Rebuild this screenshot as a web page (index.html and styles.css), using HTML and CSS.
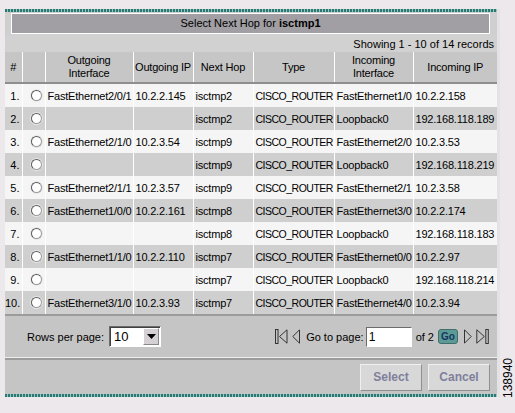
FILE: index.html
```html
<!DOCTYPE html>
<html>
<head>
<meta charset="utf-8">
<link rel="stylesheet" href="styles.css">
</head>
<body>
<div class="page">
  <div class="panel">
    <div class="teal"></div>
    <div class="title-wrap">
      <div class="title">Select Next Hop for <b>isctmp1</b></div>
    </div>
    <div class="showing">Showing 1 - 10 of 14 records</div>
    <table class="grid">
      <colgroup>
        <col class="c-num"><col class="c-radio"><col class="c-oif"><col class="c-oip"><col class="c-nh"><col class="c-type"><col class="c-iif"><col class="c-iip">
      </colgroup>
      <thead>
        <tr>
          <th>#</th><th></th><th>Outgoing<br>Interface</th><th>Outgoing IP</th><th>Next Hop</th><th>Type</th><th>Incoming<br>Interface</th><th>Incoming IP</th>
        </tr>
      </thead>
      <tbody>
        <tr class="odd"><td class="num">1.</td><td class="rad"><span class="radio"></span></td><td>FastEthernet2/0/1</td><td>10.2.2.145</td><td>isctmp2</td><td class="type">CISCO_ROUTER</td><td>FastEthernet1/0</td><td>10.2.2.158</td></tr>
        <tr class="even"><td class="num">2.</td><td class="rad"><span class="radio"></span></td><td></td><td></td><td>isctmp2</td><td class="type">CISCO_ROUTER</td><td>Loopback0</td><td>192.168.118.189</td></tr>
        <tr class="odd"><td class="num">3.</td><td class="rad"><span class="radio"></span></td><td>FastEthernet2/1/0</td><td>10.2.3.54</td><td>isctmp9</td><td class="type">CISCO_ROUTER</td><td>FastEthernet2/0</td><td>10.2.3.53</td></tr>
        <tr class="even"><td class="num">4.</td><td class="rad"><span class="radio"></span></td><td></td><td></td><td>isctmp9</td><td class="type">CISCO_ROUTER</td><td>Loopback0</td><td>192.168.118.219</td></tr>
        <tr class="odd"><td class="num">5.</td><td class="rad"><span class="radio"></span></td><td>FastEthernet2/1/1</td><td>10.2.3.57</td><td>isctmp9</td><td class="type">CISCO_ROUTER</td><td>FastEthernet2/1</td><td>10.2.3.58</td></tr>
        <tr class="even"><td class="num">6.</td><td class="rad"><span class="radio"></span></td><td>FastEthernet1/0/0</td><td>10.2.2.161</td><td>isctmp8</td><td class="type">CISCO_ROUTER</td><td>FastEthernet3/0</td><td>10.2.2.174</td></tr>
        <tr class="odd"><td class="num">7.</td><td class="rad"><span class="radio"></span></td><td></td><td></td><td>isctmp8</td><td class="type">CISCO_ROUTER</td><td>Loopback0</td><td>192.168.118.183</td></tr>
        <tr class="even"><td class="num">8.</td><td class="rad"><span class="radio"></span></td><td>FastEthernet1/1/0</td><td>10.2.2.110</td><td>isctmp7</td><td class="type">CISCO_ROUTER</td><td>FastEthernet0/0</td><td>10.2.2.97</td></tr>
        <tr class="odd"><td class="num">9.</td><td class="rad"><span class="radio"></span></td><td></td><td></td><td>isctmp7</td><td class="type">CISCO_ROUTER</td><td>Loopback0</td><td>192.168.118.214</td></tr>
        <tr class="even"><td class="num">10.</td><td class="rad"><span class="radio"></span></td><td>FastEthernet3/1/0</td><td>10.2.3.93</td><td>isctmp7</td><td class="type">CISCO_ROUTER</td><td>FastEthernet4/0</td><td>10.2.3.94</td></tr>
      </tbody>
    </table>
    <div class="pager">
      <div class="rpp">
        <span>Rows per page:</span>
        <span class="select"><span class="sel-val">10</span><span class="sel-btn"><svg width="9" height="5" viewBox="0 0 9 5"><polygon points="0,0 9,0 4.5,5" fill="#000"/></svg></span></span>
      </div>
      <div class="nav">
        <svg class="ico" width="13" height="15" viewBox="0 0 13 15"><rect x="0.5" y="0.5" width="2.5" height="14" fill="none" stroke="#333"/><polygon points="12,0.8 4.5,7.5 12,14.2" fill="none" stroke="#333"/></svg>
        <svg class="ico" width="8" height="15" viewBox="0 0 8 15"><polygon points="7.5,0.8 0.8,7.5 7.5,14.2" fill="none" stroke="#333"/></svg>
        <span class="goto">Go to page:</span>
        <span class="pageinput">1</span>
        <span class="of">of 2</span>
        <span class="go">Go</span>
        <svg class="ico" width="8" height="15" viewBox="0 0 8 15"><polygon points="0.5,0.8 7.2,7.5 0.5,14.2" fill="none" stroke="#333"/></svg>
        <svg class="ico" width="13" height="15" viewBox="0 0 13 15"><polygon points="0.8,0.8 8.3,7.5 0.8,14.2" fill="none" stroke="#333"/><rect x="9.8" y="0.5" width="2.5" height="14" fill="none" stroke="#333"/></svg>
      </div>
    </div>
    <div class="actions">
      <span class="btn">Select</span>
      <span class="btn">Cancel</span>
    </div>
    <div class="teal"></div>
  </div>
  <div class="figno">138940</div>
</div>
</body>
</html>
```

FILE: styles.css
```css
html, body {
  margin: 0;
  padding: 0;
  background: #ece8ec;
}
body {
  font-family: "Liberation Sans", Arial, sans-serif;
  font-size: 11px;
  color: #000;
}
.page {
  display: flex;
  align-items: flex-start;
  padding: 9px 0 0 5px;
}
.panel {
  width: 492px;
  flex: none;
  background: #cfcfcf;
  border-right: 3px solid #e4e2e4;
}
.teal {
  height: 3px;
  background: repeating-linear-gradient(90deg, #2c7772 0 2px, #93c9c1 2px 3px);
}
.title-wrap {
  padding: 1px 7px 1px 6px;
}
.title {
  height: 19px;
  line-height: 19px;
  border: 1px solid #fff;
  background: #a19fa3;
  text-align: center;
  font-size: 11px;
}
.showing {
  height: 17px;
  line-height: 18px;
  text-align: right;
  padding-right: 3px;
  background: #d1d1d1;
}
.grid {
  width: 492px;
  border-collapse: collapse;
  table-layout: fixed;
}
.c-num { width: 17px; }
.c-radio { width: 23px; }
.c-oif { width: 88px; }
.c-oip { width: 60px; }
.c-nh { width: 60px; }
.c-type { width: 81px; }
.c-iif { width: 79px; }
.c-iip { width: 84px; }
.grid th {
  height: 30px;
  padding: 0;
  font-weight: normal;
  background: #c6c6c6;
  border-left: 1px solid #fff;
  border-bottom: 2px solid #8e8e8e;
  line-height: 13px;
  letter-spacing: -0.2px;
  white-space: nowrap;
  text-align: center;
  vertical-align: middle;
}
.grid th:first-child {
  border-left: none;
}
.grid td {
  height: 23px;
  padding: 0 0 0 2px;
  border-left: 1px solid #fff;
  white-space: nowrap;
  overflow: hidden;
  letter-spacing: -0.2px;
  vertical-align: middle;
}
.grid td.type {
  font-size: 10.5px;
  letter-spacing: -0.5px;
}
.grid td:first-child {
  border-left: none;
}
.grid tr.odd td {
  background: #f5f5f5;
}
.grid tr.even td {
  background: #cfcfcf;
}
.grid td.num {
  text-align: right;
  padding: 0 2px 0 0;
  letter-spacing: 0;
}
.grid td.rad {
  padding: 0 0 0 8px;
}
.radio {
  display: block;
  width: 9px;
  height: 9px;
  border-radius: 50%;
  border: 1px solid #9a9a9a;
  border-top-color: #5a5a5a;
  border-left-color: #5a5a5a;
  background: #fff;
  box-shadow: 0 0 0 1px #e8e8e8;
}
.pager {
  display: flex;
  align-items: center;
  justify-content: space-between;
  height: 41px;
  border-top: 2px solid #9c9c9c;
  background: #c5c5c5;
  padding: 0 4px 0 22px;
}
.rpp {
  display: flex;
  align-items: center;
  gap: 5px;
}
.select {
  display: flex;
  align-items: center;
  width: 50px;
  height: 19px;
  background: #fff;
  border: 1px solid #fff;
  border-top-color: #6b6b6b;
  border-left-color: #6b6b6b;
  box-shadow: inset 1px 1px 0 #404040;
}
.sel-val {
  flex: 1;
  padding-left: 4px;
  font-size: 13px;
}
.sel-btn {
  width: 14px;
  height: 15px;
  margin-right: 1px;
  display: flex;
  align-items: center;
  justify-content: center;
  background: #d4d0d4;
  border: 1px solid #888;
  border-top-color: #fff;
  border-left-color: #fff;
}
.nav {
  display: flex;
  align-items: center;
}
.ico {
  display: block;
  margin-right: 4px;
}
.goto {
  margin-left: 2px;
  margin-right: 2px;
}
.pageinput {
  width: 42px;
  height: 18px;
  line-height: 18px;
  padding-left: 2px;
  background: #fff;
  border: 1px solid #fff;
  border-top-color: #6b6b6b;
  border-left-color: #6b6b6b;
  font-size: 12px;
}
.of {
  margin-left: 4px;
  margin-right: 4px;
}
.go {
  width: 18px;
  height: 13px;
  line-height: 13px;
  text-align: center;
  font-size: 10px;
  font-weight: bold;
  color: #163560;
  background: #5c9a96;
  border-radius: 3px;
  border: 1px solid #3f6e6b;
  margin-right: 6px;
}
.actions {
  display: flex;
  justify-content: flex-end;
  align-items: center;
  gap: 6px;
  height: 36px;
  padding-right: 7px;
  border-top: 1px solid #eeeeee;
  box-shadow: inset 0 2px 0 #9c9c9c;
  background: #c5c5c5;
}
.btn {
  width: 60px;
  height: 25px;
  line-height: 25px;
  text-align: center;
  font-size: 12px;
  font-weight: bold;
  color: #7f7f9c;
  background: #d8d8d8;
  border: 1px solid #8f8f8f;
  border-top-color: #f0f0f0;
  border-left-color: #f0f0f0;
  margin-top: 2px;
}
.figno {
  writing-mode: vertical-rl;
  transform: rotate(180deg);
  font-size: 12px;
  line-height: 12px;
  margin-top: 349px;
  margin-left: 2px;
}
```
